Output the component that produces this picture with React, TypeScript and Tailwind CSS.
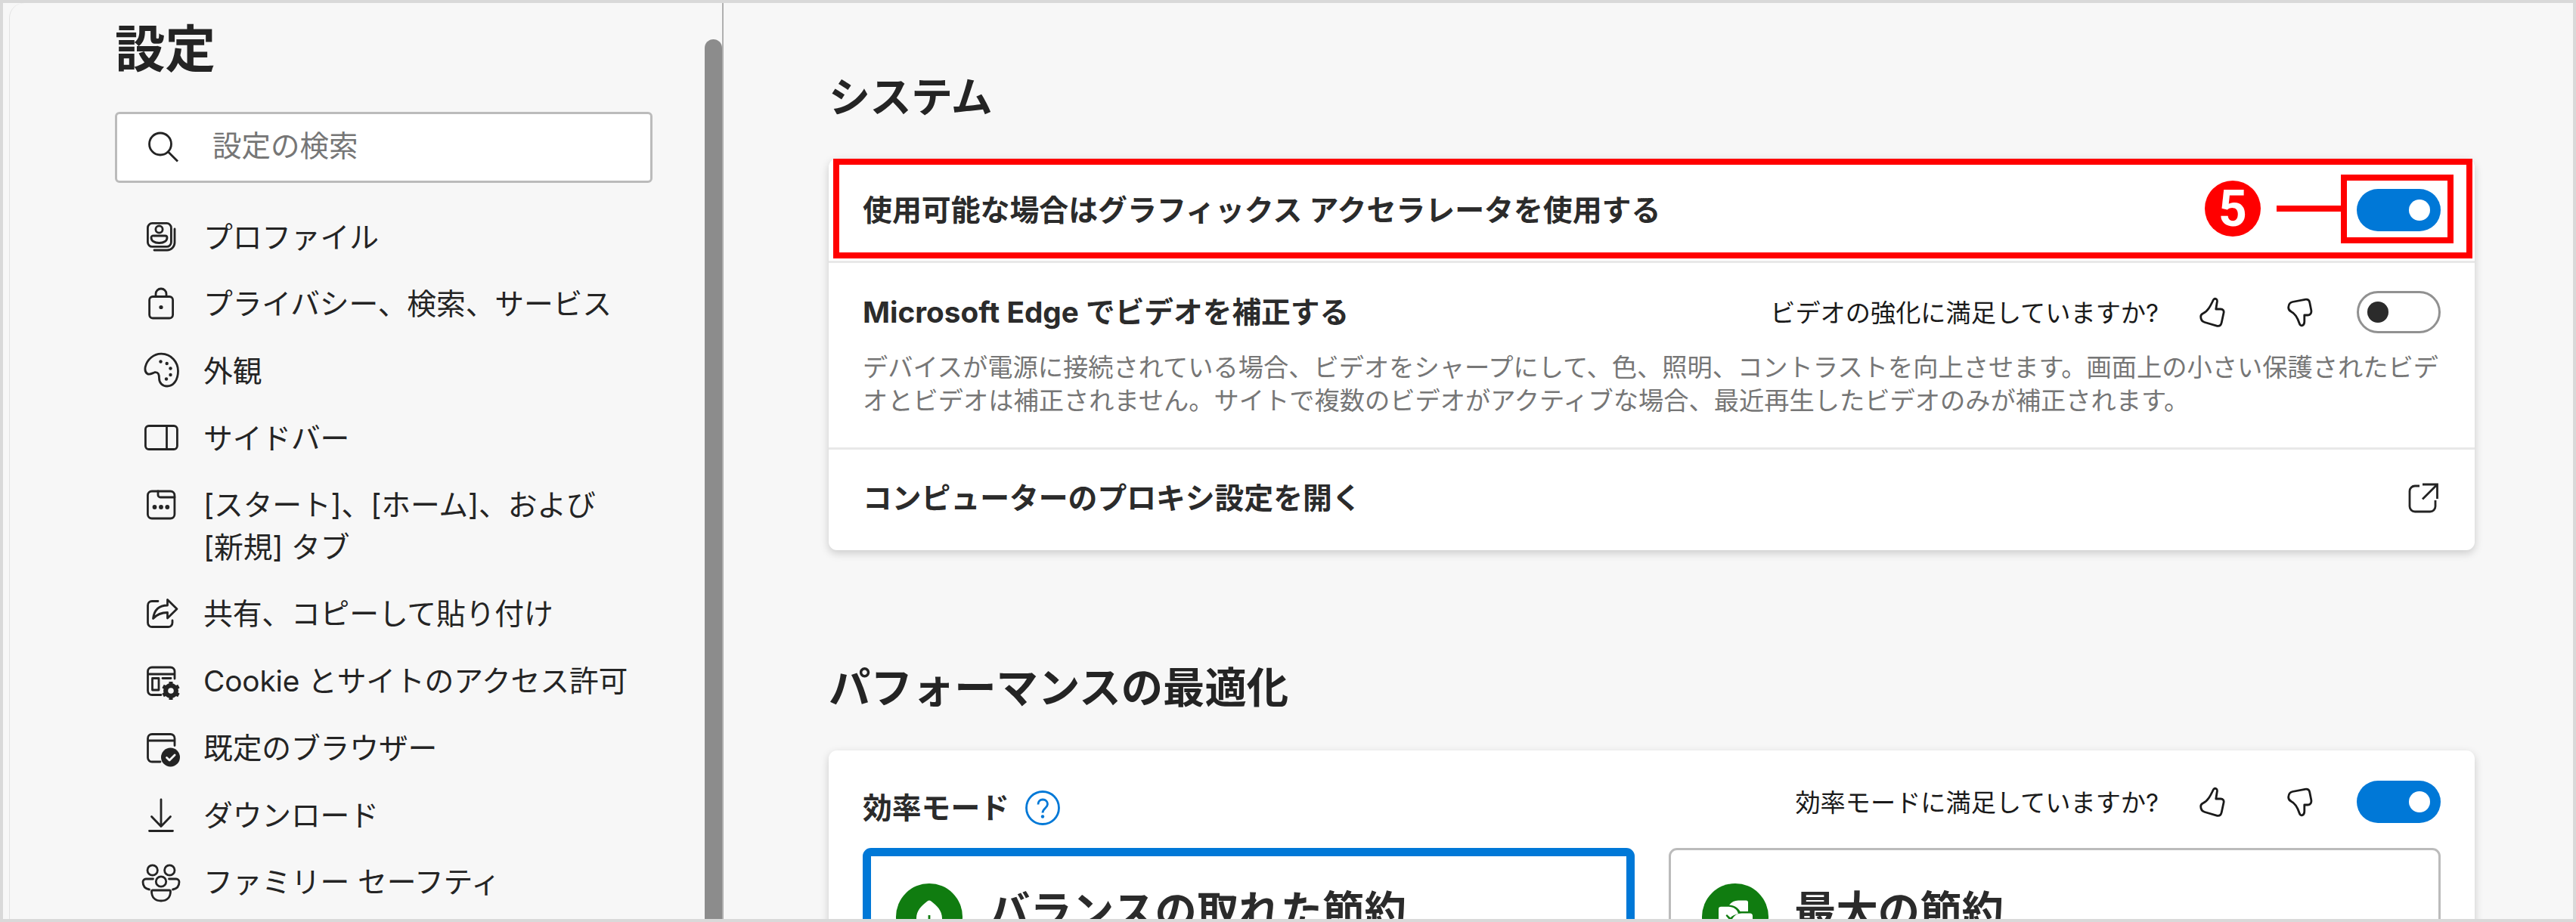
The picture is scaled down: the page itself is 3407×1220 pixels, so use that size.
import type { ReactNode } from "react";

type IconProps = { children: ReactNode };

function NavIcon({ children }: IconProps) {
  return (
    <svg
      viewBox="0 0 56 56"
      className="mt-4 h-14 w-14 shrink-0 overflow-visible"
      fill="none"
      stroke="#242424"
      strokeWidth="2.8"
      strokeLinecap="round"
      strokeLinejoin="round"
    >
      {children}
    </svg>
  );
}

const navItems: { lines: string[]; icon: ReactNode }[] = [
  {
    lines: ["プロファイル"],
    icon: (
      <>
        <rect x="10.4" y="10.4" width="31" height="31" rx="6" />
        <path d="M46 18v18a10 10 0 0 1-10 10H19" />
        <circle cx="25.5" cy="18.5" r="4.6" />
        <path d="M18 27h15.500a2.500 2.500 0 0 1 2.500 2.500c0 4-4 7-10.500 7s-10.500-3-10.500-7a2.500 2.500 0 0 1 3-2.500z" />
      </>
    ),
  },
  {
    lines: ["プライバシー、検索、サービス"],
    icon: (
      <>
        <rect x="12.6" y="18.5" width="31" height="28.5" rx="4.5" />
        <path d="M21 18v-3a7 7 0 0 1 14 0v3" />
        <circle cx="28" cy="32.5" r="2.6" fill="#242424" stroke="none" />
      </>
    ),
  },
  {
    lines: ["外観"],
    icon: (
      <>
        <path d="M7.2 23.500C9.500 13.500 18.500 6 28.500 6.200 41.500 6.500 50.500 17 50.500 29c0 11-5.500 20-14.500 20-6.500 0-10.500-4.500-10.500-10.500 0-5-1-8.500-6-7.800-4 1.500-6.500 3.800-9.700 1.800-2.400-1.500-3.200-5.500-2.600-9z" />
        <g fill="#242424" stroke="none">
          <circle cx="27.5" cy="16.5" r="2.2" />
          <circle cx="35.7" cy="19" r="2.2" />
          <circle cx="40.5" cy="25.5" r="2.2" />
          <circle cx="40.5" cy="34" r="2.2" />
          <circle cx="35" cy="39.5" r="2.2" />
        </g>
      </>
    ),
  },
  {
    lines: ["サイドバー"],
    icon: (
      <>
        <rect x="7.4" y="12.5" width="42" height="31" rx="4.5" />
        <path d="M35.5 12.5v31" />
      </>
    ),
  },
  {
    lines: ["[スタート]、[ホーム]、および", "[新規] タブ"],
    icon: (
      <>
        <rect x="10.4" y="10" width="35.5" height="36" rx="5.5" />
        <path d="M24 10v5a3 3 0 0 0 3 3h19" />
        <g fill="#242424" stroke="none">
          <circle cx="19.5" cy="31" r="2.9" />
          <circle cx="28" cy="31" r="2.9" />
          <circle cx="36.3" cy="31" r="2.9" />
        </g>
      </>
    ),
  },
  {
    lines: ["共有、コピーして貼り付け"],
    icon: (
      <>
        <path d="M24 11.5h-8a5.500 5.500 0 0 0-5.500 5.500v23a5.500 5.500 0 0 0 5.500 5.500h21.500a5.500 5.500 0 0 0 5.500-5.500v-3" />
        <path d="M36.500 9.500v7.500C26 17 19 22.500 17.500 34.500c5-5.500 10.500-8 19-8v7.500L49 21.700z" />
      </>
    ),
  },
  {
    lines: ["Cookie とサイトのアクセス許可"],
    icon: (
      <>
        <path d="M28 46.5H16a5.500 5.500 0 0 1-5.500-5.500V15.500A5.500 5.500 0 0 1 16 10h24.500a5.500 5.500 0 0 1 5.500 5.500V25M10.500 19H46" />
        <rect x="16.5" y="24.5" width="8.5" height="15.5" />
        <path d="M30 24.5h11" />
        <circle cx="41" cy="41" r="7" strokeWidth="6" />
        <path
          d="M41 29v24M30.6 35l20.800 12M30.600 47l20.800-12"
          strokeWidth="5"
          strokeLinecap="butt"
        />
        <circle cx="41" cy="41" r="3.8" fill="#f7f7f7" stroke="none" />
      </>
    ),
  },
  {
    lines: ["既定のブラウザー"],
    icon: (
      <>
        <path d="M27 47H16a5.500 5.500 0 0 1-5.500-5.500V16a5.500 5.500 0 0 1 5.500-5.500h24.500A5.500 5.500 0 0 1 46 16v9.500M10.500 19H46" />
        <circle cx="40.5" cy="41" r="12.5" fill="#242424" stroke="none" />
        <path d="M35.5 41.5l3.600 3.500 7-7" stroke="#f7f7f7" />
      </>
    ),
  },
  {
    lines: ["ダウンロード"],
    icon: <path d="M28 8v35M15.500 30.500L28 43.500l12.500-13M12.500 49.500h31" />,
  },
  {
    lines: ["ファミリー セーフティ"],
    icon: (
      <>
        <circle cx="16.7" cy="12.5" r="6.7" />
        <circle cx="39.3" cy="12.5" r="6.7" />
        <circle cx="28" cy="27.5" r="6.7" />
        <path d="M17.500 24H8a4 4 0 0 0-4 4c0 5 3 9 8.500 10M38.500 24H48a4 4 0 0 1 4 4c0 5-3 9-8.500 10" />
        <path d="M17 39h22a1.500 1.500 0 0 1 1.500 1.500c0 7.500-4.500 12.500-12.500 12.500s-12.500-5-12.500-12.500A1.500 1.500 0 0 1 17 39z" />
      </>
    ),
  },
];

function Toggle({ on }: { on?: boolean }) {
  return on ? (
    <div className="flex h-14 w-[111px] shrink-0 items-center justify-end rounded-full bg-[#0078d7] pr-[14px]">
      <div className="h-7 w-7 rounded-full bg-white" />
    </div>
  ) : (
    <div className="flex h-14 w-[111px] shrink-0 items-center rounded-full border-[3px] border-[#919191] bg-white pl-[11px]">
      <div className="h-7 w-7 rounded-full bg-[#2b2b2b]" />
    </div>
  );
}

function Feedback({ text }: { text: string }) {
  return (
    <div className="flex h-14 items-center">
      <span className="pt-0.5 text-[33.2px] leading-14 text-[#1a1a1a]">
        {text}
      </span>
      <svg
        viewBox="0 0 34 40"
        className="ml-[54px] h-10 w-[34px]"
        fill="none"
        stroke="#1a1a1a"
        strokeWidth="2.8"
        strokeLinejoin="round"
      >
        <path d="M18.500 3.500c2-2.500 5.200-1 4.900 2.200L21.800 16h6.200c3 0 4.700 2 4 5l-2.800 13c-.7 3-2.700 4.800-5.700 4.300L7 33.500c-3.500-1-5.300-4-5.300-7.500 0-2.200 1-3.200 3-4.200C11 19 14.500 12 18.500 3.500z" />
      </svg>
      <svg
        viewBox="0 0 34 40"
        className="ml-[82px] h-10 w-[34px]"
        fill="none"
        stroke="#1a1a1a"
        strokeWidth="2.8"
        strokeLinejoin="round"
      >
        <path d="M7 6.500L23.500 3.300c3.500-.6 5.700 1 6.300 4.200l2 10c.6 3.500-1 6.500-4.300 6.500h-4.700v8.500c0 6-5.300 7-6.600 2.500C14 28.500 11 22 5.500 19.500 2.500 18 1.500 16.500 1.700 13.500 2 9.500 3.500 7.200 7 6.500z" />
      </svg>
    </div>
  );
}

function ModeCard({
  title,
  selected,
  children,
}: {
  title: string;
  selected?: boolean;
  children: ReactNode;
}) {
  return (
    <div
      className={
        selected
          ? "flex h-60 w-[1021px] shrink-0 rounded-[11px] border-[11px] border-[#0078d7] pt-9 pl-[33px]"
          : "flex h-60 w-[1021px] shrink-0 rounded-[11px] border-[3px] border-[#bbb] pt-11 pl-[41px]"
      }
    >
      <svg viewBox="0 0 88 88" className="h-[88px] w-[88px] shrink-0">
        <circle cx="44" cy="44" r="44" fill="#107c10" />
        {children}
      </svg>
      <span className="ml-[34px] text-[55.4px] leading-[74px] font-bold text-[#2b2b2b]">
        {title}
      </span>
    </div>
  );
}

function Sidebar() {
  return (
    <aside className="ml-2 flex w-[945px] shrink-0 justify-between overflow-hidden rounded-tl-[20px] border-r-2 border-l border-r-[#b0b0b0] border-l-[#e2e2e2]">
      <div className="pl-[139px]">
        <h1 className="pt-[21px] text-[66.5px] leading-[80px] font-bold text-[#242424]">
          設定
        </h1>
        <div className="mt-[43px] flex h-[94px] w-[711px] items-center rounded-[6px] border-[3px] border-[#bbb] bg-white">
          <svg
            viewBox="0 0 42 42"
            className="ml-10 h-[42px] w-[42px]"
            fill="none"
            stroke="#242424"
            strokeWidth="2.8"
          >
            <circle cx="17" cy="16.5" r="14.5" />
            <path d="M27.5 27L40 39.5" />
          </svg>
          <span className="ml-11 pb-1 text-[38.5px] leading-[56px] text-[#767676]">
            設定の検索
          </span>
        </div>
        <nav className="mt-[27px] pl-[33px]">
          {navItems.map((item) => (
            <div key={item.lines[0]} className="flex">
              <NavIcon>{item.icon}</NavIcon>
              <div className="ml-[28px] py-[16.65px] text-[38.8px] leading-[55.4px] tracking-[-0.15px] whitespace-nowrap text-[#242424]">
                {item.lines.map((line) => (
                  <div key={line}>{line}</div>
                ))}
              </div>
            </div>
          ))}
        </nav>
      </div>
      <div className="mt-12 h-[1200px] w-[23px] rounded-t-full bg-[#8c8c8c]" />
    </aside>
  );
}

export default function App() {
  return (
    <div className="flex h-[1220px] w-[3407px] overflow-hidden border-4 border-[#d9d9d9] bg-[#f7f7f7] font-[Inter,'Noto_Sans_CJK_JP',sans-serif]">
      <Sidebar />
      <main className="w-[2316px] pl-[139px]">
        <h2 className="mt-[84px] text-[55px] leading-[80px] font-bold tracking-[-0.5px] text-[#242424]">
          システム
        </h2>
        <section className="relative mt-[42px] h-[518px] rounded-[11px] bg-white shadow-[0_4px_12px_rgba(0,0,0,0.18)]">
          <div className="flex h-[138px] items-center justify-between border-b-[3px] border-[#e8e8e8] px-[45px]">
            <span className="text-[38.9px] leading-14 font-bold text-[#2b2b2b]">
              使用可能な場合はグラフィックス アクセラレータを使用する
            </span>
            <Toggle on />
          </div>
          <div className="h-[247px] border-b-[3px] border-[#e8e8e8] px-[45px] pt-[37px]">
            <div className="flex justify-between">
              <span className="text-[38.7px] leading-14 font-bold text-[#2b2b2b]">
                Microsoft Edge でビデオを補正する
              </span>
              <div className="flex gap-[58px]">
                <Feedback text="ビデオの強化に満足していますか?" />
                <Toggle />
              </div>
            </div>
            <p className="mt-[23px] text-[33.25px] leading-[44.3px] whitespace-nowrap text-[#767676]">
              デバイスが電源に接続されている場合、ビデオをシャープにして、色、照明、コントラストを向上させます。画面上の小さい保護されたビデ
              <br />
              オとビデオは補正されません。サイトで複数のビデオがアクティブな場合、最近再生したビデオのみが補正されます。
            </p>
          </div>
          <div className="flex h-[133px] items-center justify-between pr-[47px] pb-1.5 pl-[45px]">
            <span className="text-[38.8px] leading-14 font-bold text-[#2b2b2b]">
              コンピューターのプロキシ設定を開く
            </span>
            <svg
              viewBox="0 0 42 42"
              className="h-[42px] w-[42px]"
              fill="none"
              stroke="#242424"
              strokeWidth="2.8"
            >
              <path d="M16 5H10a7 7 0 0 0-7 7v20a7 7 0 0 0 7 7h20a7 7 0 0 0 7-7v-8M20 3h19.500v19M39.500 3L20 22.500" />
            </svg>
          </div>

          {/* callout 5 */}
          <div className="absolute top-0 left-[6px] h-[132px] w-[2168px] border-8 border-[#f00]" />
          <div className="absolute top-[21px] right-[28px] h-[91px] w-[149px] border-8 border-[#f00]" />
          <div className="absolute top-[62px] right-[177px] h-2 w-[85px] bg-[#f00]" />
          <div className="absolute top-[29px] right-[283px] flex h-[74px] w-[74px] items-center justify-center rounded-full bg-[#f00] pt-0.5 font-[Roboto,'Liberation_Sans',sans-serif] text-[66px] leading-[74px] font-bold text-white">
            5
          </div>
        </section>

        <h2 className="mt-[142px] text-[55.4px] leading-[80px] font-bold text-[#242424]">
          パフォーマンスの最適化
        </h2>
        <section className="mt-[43px] h-[400px] rounded-[11px] bg-white px-[45px] pt-[40px] shadow-[0_4px_12px_rgba(0,0,0,0.18)]">
          <div className="flex justify-between">
            <div className="flex h-[70px] items-center pt-0.5">
              <span className="text-[38.8px] leading-14 font-bold text-[#2b2b2b]">
                効率モード
              </span>
              <svg
                viewBox="0 0 46 46"
                className="ml-[21px] h-[46px] w-[46px]"
                fill="none"
                stroke="#0078d7"
                strokeWidth="2.8"
              >
                <circle cx="23" cy="23" r="21.5" />
                <path d="M17 18.500c0-4 2.500-6.500 6.200-6.500s6.300 2.500 6.300 6c0 5.500-6.500 5.700-6.500 11.500" />
                <circle cx="23" cy="34.5" r="2.2" fill="#0078d7" stroke="none" />
              </svg>
            </div>
            <div className="flex gap-[58px]">
              <Feedback text="効率モードに満足していますか?" />
              <Toggle on />
            </div>
          </div>
          <div className="mt-[19px] flex justify-between">
            <ModeCard title="バランスの取れた節約" selected>
              <path
                d="M41.500 23.500c1.500-1.500 3.500-1.500 5 0C54 29 61 36 61 46c0 10-7 16-17 16s-17-6-17-16c0-10 7-17 14.500-22.500z"
                fill="#fff"
              />
              <path d="M44 42v30" stroke="#107c10" strokeWidth="2.8" />
            </ModeCard>
            <ModeCard title="最大の節約">
              <path
                d="M36 28.500c3-4 7-6 12-6h10.500a2.500 2.500 0 0 1 2.500 2.500V37H50.500C48 32 42.500 29 36 28.500z"
                fill="#fff"
              />
              <path
                d="M22 34a3.300 3.300 0 0 1 3.300-3.300H35c7 0 12 4 13 9.500-4 .5-8 2.500-10.500 5L33 41l-1.500 1.500L37 49v13H34C26 62 22 56 22 47z"
                fill="#fff"
              />
              <path
                d="M39.500 48c2.500-5 6.500-8.500 13-8.500h11a3.500 3.500 0 0 1 3.500 3.500v5c0 9-6 14-14 14H39.500z"
                fill="#fff"
              />
            </ModeCard>
          </div>
        </section>
      </main>
    </div>
  );
}
